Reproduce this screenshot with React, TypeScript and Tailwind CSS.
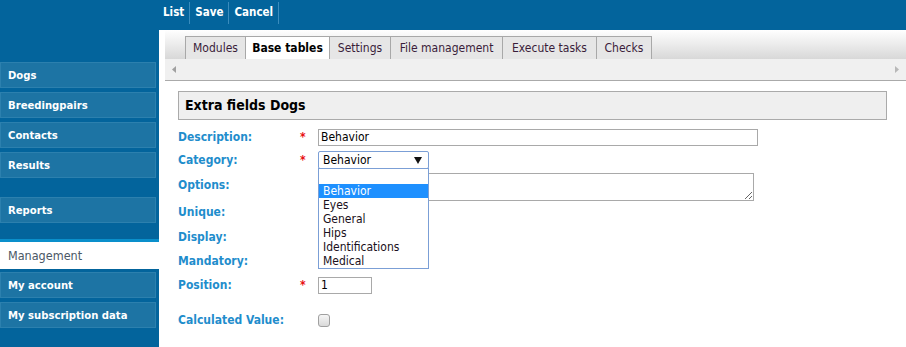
import React from "react";

const font = "font-['DejaVu_Sans_Condensed','DejaVu_Sans',Tahoma,sans-serif]";

function SideItem({ label }: { label: string }) {
  return (
    <div className="w-[156px] h-[26px] mb-[4px] bg-[#1d74a4] border border-[#2c80ae] flex items-center pl-[7px] pt-[2px] text-white font-bold text-[11.2px]">
      {label}
    </div>
  );
}

const tabs: { label: string; w: string; active?: boolean }[] = [
  { label: "Modules", w: "w-[61px]" },
  { label: "Base tables", w: "w-[84px]", active: true },
  { label: "Settings", w: "w-[61px]" },
  { label: "File management", w: "w-[112px]" },
  { label: "Execute tasks", w: "w-[94px]" },
  { label: "Checks", w: "w-[55px]" },
];

function Label({ children, req }: { children: React.ReactNode; req?: boolean }) {
  return (
    <>
      <div className="w-[122px] shrink-0 font-bold text-[12px] text-[#1f8dcc] leading-[14px]">{children}</div>
      <div className="w-[18px] shrink-0 text-[#e81010] text-[12px] font-bold leading-[14px]">{req ? "*" : ""}</div>
    </>
  );
}

export default function App() {
  return (
    <div className={`w-[906px] h-[347px] bg-[#03649c] flex flex-col overflow-hidden ${font}`}>
      {/* top bar */}
      <div className="h-[30px] shrink-0 flex items-start pt-[2px] pl-[158px]">
        {["List", "Save", "Cancel"].map((t) => (
          <div key={t} className="h-[22px] px-[5px] border-r border-[#3a8cbd] flex items-center text-white font-bold text-[11.5px]">
            {t}
          </div>
        ))}
      </div>

      <div className="flex flex-1 min-h-0">
        {/* sidebar */}
        <div className="w-[159px] shrink-0 pt-[32px] flex flex-col">
          <SideItem label="Dogs" />
          <SideItem label="Breedingpairs" />
          <SideItem label="Contacts" />
          <SideItem label="Results" />
          <div className="mt-[15px]">
            <SideItem label="Reports" />
          </div>
          <div className="mt-[12px] w-[159px] h-[30px] mb-[3px] border-t-[3px] border-[#0a8fcb] bg-white flex items-center pl-[8px] pt-[1px] text-[12.5px] text-[#4b5866]">
            Management
          </div>
          <SideItem label="My account" />
          <SideItem label="My subscription data" />
        </div>

        {/* content */}
        <div className="flex-1 bg-white pl-[6px] flex flex-col text-black">
          <div className="h-[29px] pt-[6px] pl-[20px] flex bg-gradient-to-b from-white to-[#d8d8d8]">
            {tabs.map((t) => (
              <div
                key={t.label}
                className={`${t.w} h-[23px] flex items-center justify-center text-[12px] border-t border-r border-[#a8a8a8] first:border-l ${
                  t.active ? "bg-white font-bold text-black" : "bg-[#e6e6e6] text-[#3a1d3a]"
                }`}
              >
                {t.label}
              </div>
            ))}
          </div>
          <div className="h-[22px] bg-[#f0f0f0] border-b border-[#aaaaaa] flex items-center justify-between px-[7px]">
            <svg width="4" height="7" viewBox="0 0 4 7"><path d="M4 0 L0 3.5 L4 7 Z" fill="#a0a0a0" /></svg>
            <svg width="4" height="7" viewBox="0 0 4 7"><path d="M0 0 L4 3.5 L0 7 Z" fill="#b8b8b8" /></svg>
          </div>

          <div className="pl-[13px] pt-[10px]">
            <div className="w-[709px] h-[29px] border border-[#aaaaaa] bg-[#efefef] flex items-center pl-[6px] font-bold text-[14px]">
              Extra fields Dogs
            </div>

            <div className="mt-[6px] flex flex-col">
              {/* Description */}
              <div className="h-[22px] flex items-center">
                <Label req>Description:</Label>
                <div className="w-[440px] h-[17px] border border-[#a9a9a9] pl-[2px] text-[12px] leading-[15px]">Behavior</div>
              </div>
              {/* Category */}
              <div className="h-[24px] flex items-center">
                <Label req>Category:</Label>
                <div className="relative">
                  <div className="w-[111px] h-[18px] border border-[#7b9fd6] rounded-[2px] pl-[4px] pr-[6px] flex items-center justify-between text-[12px]">
                    <span>Behavior</span>
                    <svg width="8" height="7" viewBox="0 0 8 7"><path d="M0 0 L8 0 L4 7 Z" fill="#111" /></svg>
                  </div>
                  <div className="absolute left-0 top-[17px] w-[111px] h-[101px] border border-[#7b9fd6] bg-white z-10 text-[12px] pt-[15px]">
                    {["Behavior", "Eyes", "General", "Hips", "Identifications", "Medical"].map((o, i) => (
                      <div key={o} className={`h-[14px] leading-[14px] pl-[4px] ${i === 0 ? "bg-[#1e90ff] text-white" : "text-[#1a1020]"}`}>
                        {o}
                      </div>
                    ))}
                  </div>
                </div>
              </div>
              {/* Options */}
              <div className="h-[28px] flex items-start">
                <div className="pt-[6px] flex">
                  <Label>Options:</Label>
                </div>
                <textarea
                  readOnly
                  className="mt-[1px] w-[436px] h-[28px] border border-[#a9a9a9] outline-none"
                />
              </div>
              <div className="h-[24px] flex items-center">
                <Label>Unique:</Label>
              </div>
              <div className="h-[25px] flex items-center">
                <Label>Display:</Label>
              </div>
              <div className="h-[24px] flex items-center">
                <Label>Mandatory:</Label>
              </div>
              <div className="h-[24px] flex items-center">
                <Label req>Position:</Label>
                <div className="w-[54px] h-[17px] border border-[#a9a9a9] pl-[2px] text-[12px] leading-[15px]">1</div>
              </div>
              <div className="mt-[11px] h-[24px] flex items-center">
                <Label>Calculated Value:</Label>
                <div className="w-[12px] h-[13px] rounded-[3px] border border-[#a0a0a0] bg-gradient-to-b from-[#f6f6f6] to-[#dadada]" />
              </div>
            </div>
          </div>
        </div>
      </div>
    </div>
  );
}
